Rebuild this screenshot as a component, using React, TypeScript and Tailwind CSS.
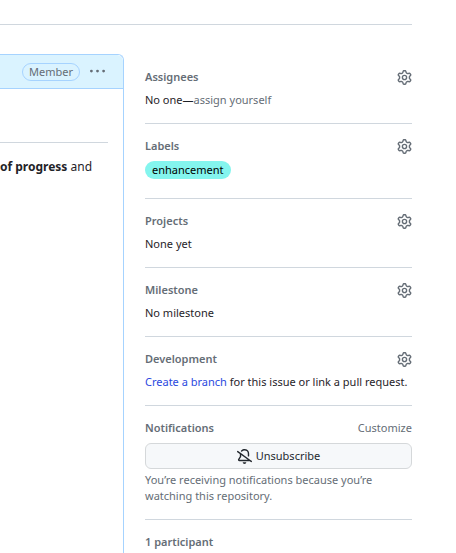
import type { ReactNode } from "react";

function Gear() {
  return (
    <svg viewBox="0 0 16 16" className="size-[15px]" fill="currentColor" aria-hidden="true">
      <path d="M8 0a8.2 8.2 0 0 1 .701.031C9.444.095 9.99.645 10.16 1.29l.288 1.107c.018.066.079.158.212.224.231.114.454.243.668.386.123.082.233.09.299.071l1.103-.303c.644-.176 1.392.021 1.82.63.27.385.506.792.704 1.218.315.675.111 1.422-.364 1.891l-.814.806c-.049.048-.098.147-.088.294.016.257.016.515 0 .772-.01.147.038.246.088.294l.814.806c.475.469.679 1.216.364 1.891a7.977 7.977 0 0 1-.704 1.217c-.428.61-1.176.807-1.82.63l-1.102-.302c-.067-.019-.177-.011-.3.071a5.909 5.909 0 0 1-.668.386c-.133.066-.194.158-.211.224l-.29 1.106c-.168.646-.715 1.196-1.458 1.26a8.006 8.006 0 0 1-1.402 0c-.743-.064-1.289-.614-1.458-1.26l-.289-1.106c-.018-.066-.079-.158-.212-.224a5.738 5.738 0 0 1-.668-.386c-.123-.082-.233-.09-.299-.071l-1.103.303c-.644.176-1.392-.021-1.82-.63a8.12 8.12 0 0 1-.704-1.218c-.315-.675-.111-1.422.363-1.891l.815-.806c.05-.048.098-.147.088-.294a6.214 6.214 0 0 1 0-.772c.01-.147-.038-.246-.088-.294l-.815-.806C.635 6.045.431 5.298.746 4.623a7.92 7.92 0 0 1 .704-1.217c.428-.61 1.176-.807 1.82-.63l1.102.302c.067.019.177.011.3-.071.214-.143.437-.272.668-.386.133-.066.194-.158.211-.224l.29-1.106C6.009.645 6.556.095 7.299.03 7.53.01 7.764 0 8 0Zm-.571 1.525c-.036.003-.108.036-.137.146l-.289 1.105c-.147.561-.549.967-.998 1.189-.173.086-.34.183-.5.29-.417.278-.97.423-1.529.27l-1.103-.303c-.109-.03-.175.016-.195.045-.22.312-.412.644-.573.99-.014.031-.021.11.059.19l.815.806c.411.406.562.957.53 1.456a4.709 4.709 0 0 0 0 .582c.032.499-.119 1.05-.53 1.456l-.815.806c-.081.08-.073.159-.059.19.162.346.353.677.573.989.02.03.085.076.195.046l1.102-.303c.56-.153 1.113-.008 1.53.27.161.107.328.204.501.29.447.222.85.629.997 1.189l.289 1.105c.029.109.101.143.137.146a6.6 6.6 0 0 0 1.142 0c.036-.003.108-.036.137-.146l.289-1.105c.147-.561.549-.967.998-1.189.173-.086.34-.183.5-.29.417-.278.97-.423 1.529-.27l1.103.303c.109.029.175-.016.195-.045.22-.313.411-.644.573-.99.014-.031.021-.11-.059-.19l-.815-.806c-.411-.406-.562-.957-.53-1.456a4.709 4.709 0 0 0 0-.582c-.032-.499.119-1.05.53-1.456l.815-.806c.081-.08.073-.159.059-.19a6.464 6.464 0 0 0-.573-.989c-.02-.03-.085-.076-.195-.046l-1.102.303c-.56.153-1.113.008-1.53-.27a4.44 4.44 0 0 0-.501-.29c-.447-.222-.85-.629-.997-1.189l-.289-1.105c-.029-.11-.101-.143-.137-.146a6.6 6.6 0 0 0-1.142 0ZM11 8a3 3 0 1 1-6 0 3 3 0 0 1 6 0ZM9.5 8a1.5 1.5 0 1 0-3.001.001A1.5 1.5 0 0 0 9.5 8Z" />
    </svg>
  );
}

function BellSlash() {
  return (
    <svg viewBox="0 0 16 16" className="size-[15px]" fill="currentColor" aria-hidden="true">
      <path d="m4.182 4.31.016.011 10.104 7.316.013.01 1.375.996a.75.75 0 1 1-.88 1.214L13.626 13H2.518a1.516 1.516 0 0 1-1.263-2.36l1.703-2.554A.255.255 0 0 0 3 7.947V5.305L.31 3.357a.75.75 0 1 1 .88-1.214Zm7.373 7.19L4.5 6.391v1.556c0 .346-.102.683-.294.97l-1.703 2.556a.017.017 0 0 0-.003.01c0 .005.002.009.005.012l.006.004.007.001ZM8 1.5c-.997 0-1.895.416-2.534 1.086A.75.75 0 1 1 4.38 1.55 5 5 0 0 1 13 5v2.373a.75.75 0 0 1-1.5 0V5A3.5 3.5 0 0 0 8 1.5ZM8 16a2 2 0 0 1-1.985-1.75c-.017-.137.097-.25.235-.25h3.5c.138 0 .252.113.235.25A2 2 0 0 1 8 16Z" />
    </svg>
  );
}

function Section({ title, children }: { title: string; children: ReactNode }) {
  return (
    <section className="border-b border-[#d0d7de] pt-[14px] pb-[15px]">
      <div className="mb-[7px] flex items-center justify-between text-[#656d76]">
        <h2 className="font-semibold">{title}</h2>
        <button type="button" aria-label={`Edit ${title}`}>
          <Gear />
        </button>
      </div>
      {children}
    </section>
  );
}

export default function App() {
  return (
    <div className="flex min-h-screen flex-col overflow-hidden bg-white pt-6 pr-11 font-['Noto_Sans',sans-serif] text-[11px] leading-4 text-[#1f2328]">
      <hr className="border-[#d0d7de]" />
      <div className="mt-[29px] flex flex-1 gap-[21px]">
        <main className="min-w-0 flex-1 rounded-tr-md border-t border-r border-[#a6d3ff]">
          <header className="flex h-[34px] items-center justify-end gap-[10px] rounded-tr-md border-b border-[#a6d3ff] bg-[#daf3ff] pr-[18px] text-[#656d76]">
            <span className="rounded-full border border-[#a6d3ff] px-[6px]">Member</span>
            <button type="button" aria-label="Show options">
              <svg viewBox="0 0 16 16" className="size-[15px]" fill="currentColor" aria-hidden="true">
                <path d="M8 9a1.5 1.5 0 1 0 0-3 1.5 1.5 0 0 0 0 3ZM1.5 9a1.5 1.5 0 1 0 0-3 1.5 1.5 0 0 0 0 3Zm13 0a1.5 1.5 0 1 0 0-3 1.5 1.5 0 0 0 0 3Z" />
              </svg>
            </button>
          </header>
          <div className="pt-[53px] pr-[15px]">
            <hr className="border-[#d0d7de]" />
            <p className="mt-[14px] text-[12px] leading-5 whitespace-nowrap">
              <strong className="font-bold">of progress</strong> and
            </p>
          </div>
        </main>
        <aside className="w-[267px] shrink-0 pt-px">
          <Section title="Assignees">
            <p>
              No one—<button type="button" className="text-[#656d76]">assign yourself</button>
            </p>
          </Section>
          <Section title="Labels">
            <a href="#enhancement" className="mb-1 block w-fit rounded-full bg-[#84f5ee] px-[7px] leading-[18px] text-black">
              enhancement
            </a>
          </Section>
          <Section title="Projects">
            <p>None yet</p>
          </Section>
          <Section title="Milestone">
            <p>No milestone</p>
          </Section>
          <Section title="Development">
            <p className="whitespace-nowrap">
              <button type="button" className="text-[#2a48e0]">Create a branch</button> for this issue or link a pull request.
            </p>
          </Section>
          <section className="border-b border-[#d0d7de] pt-[14px] pb-[15px] text-[#656d76]">
            <div className="mb-[7px] flex items-center justify-between">
              <h2 className="font-semibold">Notifications</h2>
              <button type="button">Customize</button>
            </div>
            <button type="button" className="mb-[3px] flex h-[26px] w-full items-center justify-center gap-1 rounded-md border border-[#d5d8da] bg-[#f6f8fa] text-[#24292f]">
              <BellSlash />
              Unsubscribe
            </button>
            <p>You’re receiving notifications because you’re watching this repository.</p>
          </section>
          <section className="pt-[14px] text-[#656d76]">
            <h2 className="font-semibold">1 participant</h2>
          </section>
        </aside>
      </div>
    </div>
  );
}
